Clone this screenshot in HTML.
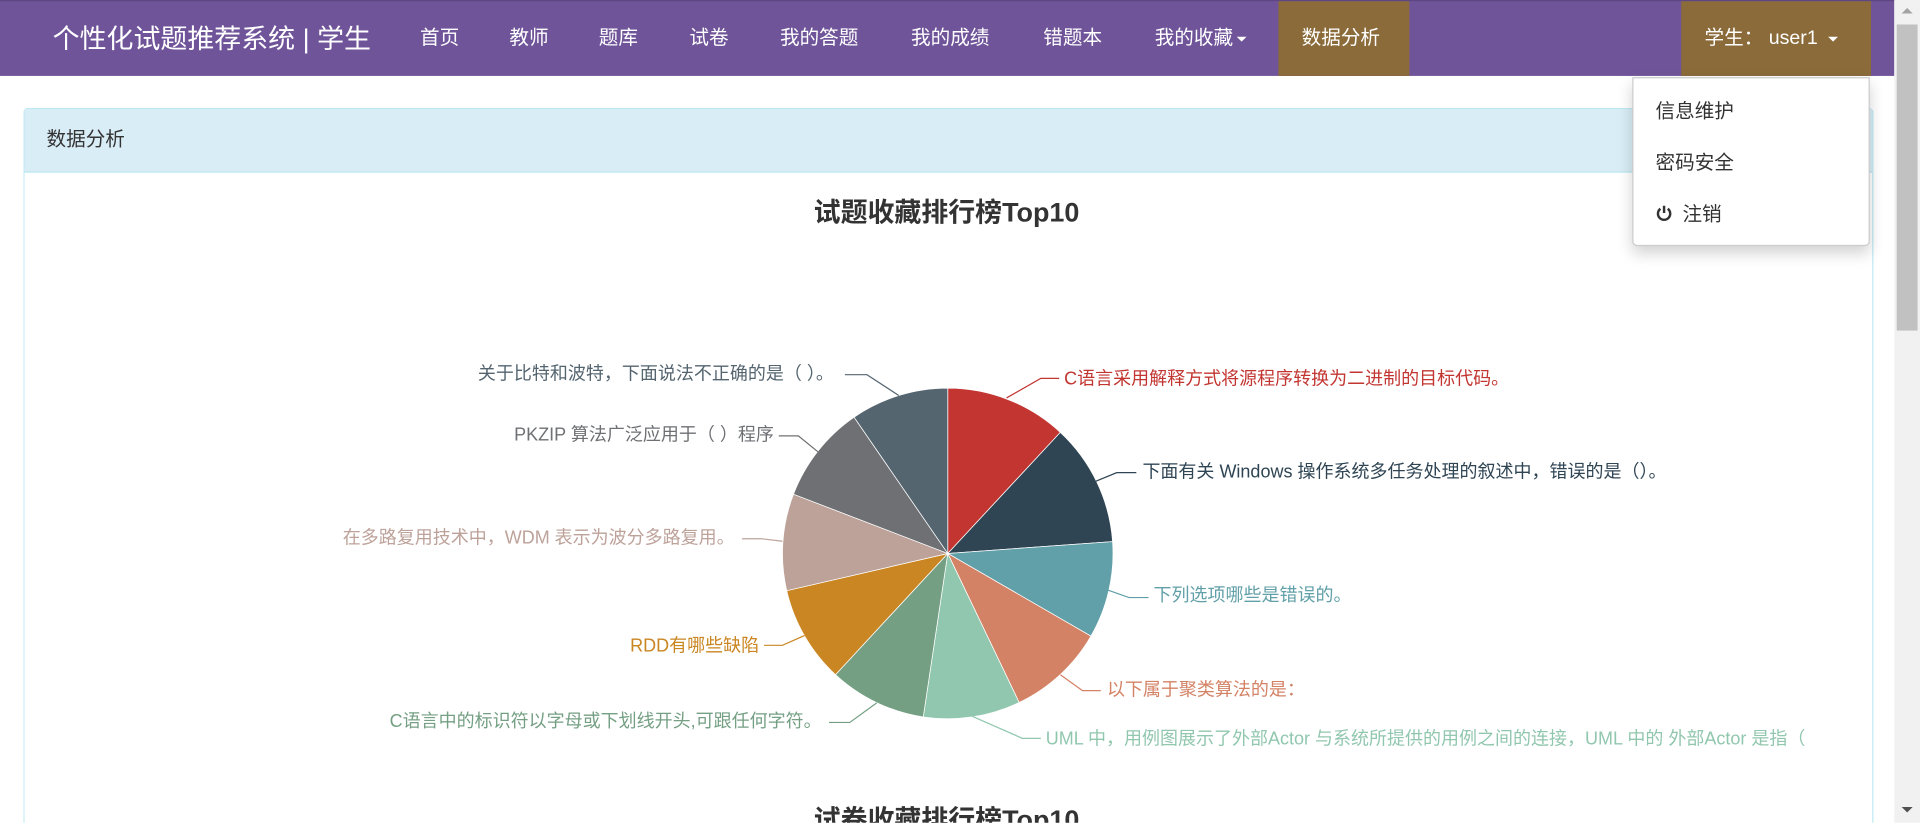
<!DOCTYPE html>
<html><head><meta charset="utf-8">
<style>
html,body{margin:0;padding:0;overflow:hidden;background:#fff;width:1920px;height:824px;}
#wrap{position:absolute;left:0;top:0;width:1568px;height:672px;overflow:hidden;transform:scale(1.22449);transform-origin:0 0;font-family:"Liberation Sans","Noto Sans CJK SC",sans-serif;}
.nav{position:absolute;left:0;top:0;width:1547px;height:62px;background:#6f5499;border-top:1px solid #5d4684;box-sizing:border-box;}
.nav span{position:absolute;top:0;line-height:61px;color:#fff;font-size:16px;white-space:nowrap;}
.brand{font-size:22px!important;}
.active{position:absolute;left:1044px;top:0;width:107px;height:61px;background:#8b6b3a;}
.user{position:absolute;left:1373px;top:0;width:155px;height:61px;background:#8b6b3a;}
.caret{display:inline-block;width:0;height:0;border-left:4px solid transparent;border-right:4px solid transparent;border-top:4px solid #fff;vertical-align:middle;margin-left:3px;}
.sb{position:absolute;left:1547px;top:0;width:21px;height:672px;background:#f1f1f1;}
.thumb{position:absolute;left:2px;top:20px;width:17px;height:250px;background:#c1c1c1;}
.panel{position:absolute;left:19px;top:88px;width:1511px;height:584px;border:1px solid #bce8f1;border-bottom:none;border-radius:4px 4px 0 0;box-sizing:border-box;}
.ph{height:51px;background:#d9edf7;border-bottom:1px solid #bce8f1;color:#333;font-size:16px;line-height:51px;padding-left:18px;}
.dd{position:absolute;left:1333px;top:63px;width:194px;height:138px;background:#fff;border:1px solid #ccc;border-radius:0 0 4px 4px;box-shadow:0 6px 12px rgba(0,0,0,.175);box-sizing:border-box;}
.dd div{position:absolute;left:18px;font-size:16px;color:#333;}
</style></head><body>
<div id="wrap">
<div class="nav">
<div class="active"></div>
<div class="user"></div>
<span class="brand" style="left:43px;">个性化试题推荐系统 | 学生</span>
<span style="left:343px">首页</span>
<span style="left:416px">教师</span>
<span style="left:489px">题库</span>
<span style="left:563px">试卷</span>
<span style="left:637px">我的答题</span>
<span style="left:744px">我的成绩</span>
<span style="left:852px">错题本</span>
<span style="left:943px">我的收藏<i class="caret"></i></span>
<span style="left:1063px">数据分析</span>
<span style="left:1392px">学生：&nbsp;user1 <i class="caret" style="margin-left:4px"></i></span>
</div>
<div class="panel"><div class="ph">数据分析</div></div>
<svg style="position:absolute;left:0;top:0" width="1547" height="640" viewBox="0 0 1547 640" font-family="Liberation Sans, Noto Sans CJK SC, sans-serif">
<text x="773" y="181" text-anchor="middle" font-size="22" font-weight="bold" fill="#333">试题收藏排行榜Top10</text>
<g stroke="#fff" stroke-width="0.6">
<path d="M774,452 L774,317 A135,135 0 0 1 865.9,353.1 Z" fill="#c23531"/>
<path d="M774,452 L865.9,353.1 A135,135 0 0 1 908.6,442.3 Z" fill="#2f4554"/>
<path d="M774,452 L908.6,442.3 A135,135 0 0 1 890.9,519.5 Z" fill="#61a0a8"/>
<path d="M774,452 L890.9,519.5 A135,135 0 0 1 832.3,573.7 Z" fill="#d48265"/>
<path d="M774,452 L832.3,573.7 A135,135 0 0 1 754,585.5 Z" fill="#91c7ae"/>
<path d="M774,452 L754,585.5 A135,135 0 0 1 682.3,551 Z" fill="#749f83"/>
<path d="M774,452 L682.3,551 A135,135 0 0 1 642.5,482.4 Z" fill="#ca8622"/>
<path d="M774,452 L642.5,482.4 A135,135 0 0 1 648,403.6 Z" fill="#bda29a"/>
<path d="M774,452 L648,403.6 A135,135 0 0 1 697.5,340.7 Z" fill="#6e7074"/>
<path d="M774,452 L697.5,340.7 A135,135 0 0 1 774,317 Z" fill="#546570"/>
</g>
<g fill="none" stroke-width="1">
<polyline points="822,325 850,309 865,309" stroke="#c23531"/>
<polyline points="895,393 912,386 928,386" stroke="#2f4554"/>
<polyline points="905,482 922,488 938,488" stroke="#61a0a8"/>
<polyline points="866,551 884,564 899,564" stroke="#d48265"/>
<polyline points="794,585 835,603 850,603" stroke="#91c7ae"/>
<polyline points="716,574 694,590 677,590" stroke="#749f83"/>
<polyline points="657,519 639,527 624,527" stroke="#ca8622"/>
<polyline points="639,442 622,440 606,440" stroke="#bda29a"/>
<polyline points="668,369 652,356 636,356" stroke="#6e7074"/>
<polyline points="734,323 708,306 690,306" stroke="#546570"/>
</g>
<g font-size="14.7" dominant-baseline="central">
<text x="869" y="309" fill="#c23531">C语言采用解释方式将源程序转换为二进制的目标代码。</text>
<text x="933" y="385" fill="#2f4554">下面有关 Windows 操作系统多任务处理的叙述中，错误的是（）。</text>
<text x="942" y="486" fill="#61a0a8">下列选项哪些是错误的。</text>
<text x="904" y="563" fill="#d48265">以下属于聚类算法的是：</text>
<text x="854" y="603" fill="#91c7ae">UML 中，用例图展示了外部Actor 与系统所提供的用例之间的连接，UML 中的 外部Actor 是指（</text>
<text x="671" y="589" text-anchor="end" fill="#749f83">C语言中的标识符以字母或下划线开头,可跟任何字符。</text>
<text x="620" y="527" text-anchor="end" fill="#ca8622">RDD有哪些缺陷</text>
<text x="600" y="439" text-anchor="end" fill="#bda29a">在多路复用技术中，WDM 表示为波分多路复用。</text>
<text x="632" y="355" text-anchor="end" fill="#6e7074">PKZIP 算法广泛应用于（ ）程序</text>
<text x="681" y="305" text-anchor="end" fill="#546570">关于比特和波特，下面说法不正确的是（ ）。</text>
</g>
</svg>
<svg style="position:absolute;left:600px;top:655px" width="350" height="17" viewBox="0 0 350 17" font-family="Liberation Sans, Noto Sans CJK SC, sans-serif">
<text x="173" y="22" text-anchor="middle" font-size="22" font-weight="bold" fill="#333">试卷收藏排行榜Top10</text>
</svg>
<div class="dd">
<div style="top:13px">信息维护</div>
<div style="top:55px">密码安全</div>
<div style="top:97px"><svg width="14" height="14" viewBox="0 0 14 14" style="vertical-align:-1px;margin-right:8px"><path d="M4,3.5 A5,5 0 1 0 10,3.5" fill="none" stroke="#333" stroke-width="2"/><line x1="7" y1="1" x2="7" y2="7" stroke="#333" stroke-width="2"/></svg>注销</div>
</div>
<div class="sb"><div class="thumb"></div>
<svg style="position:absolute;left:5px;top:5px" width="11" height="8"><path d="M1,6 L5.5,1.5 L10,6 Z" fill="#a3a3a3"/></svg>
<svg style="position:absolute;left:5px;top:657px" width="11" height="8"><path d="M1,2 L5.5,6.5 L10,2 Z" fill="#505050"/></svg>
</div>
</div>
</body></html>
